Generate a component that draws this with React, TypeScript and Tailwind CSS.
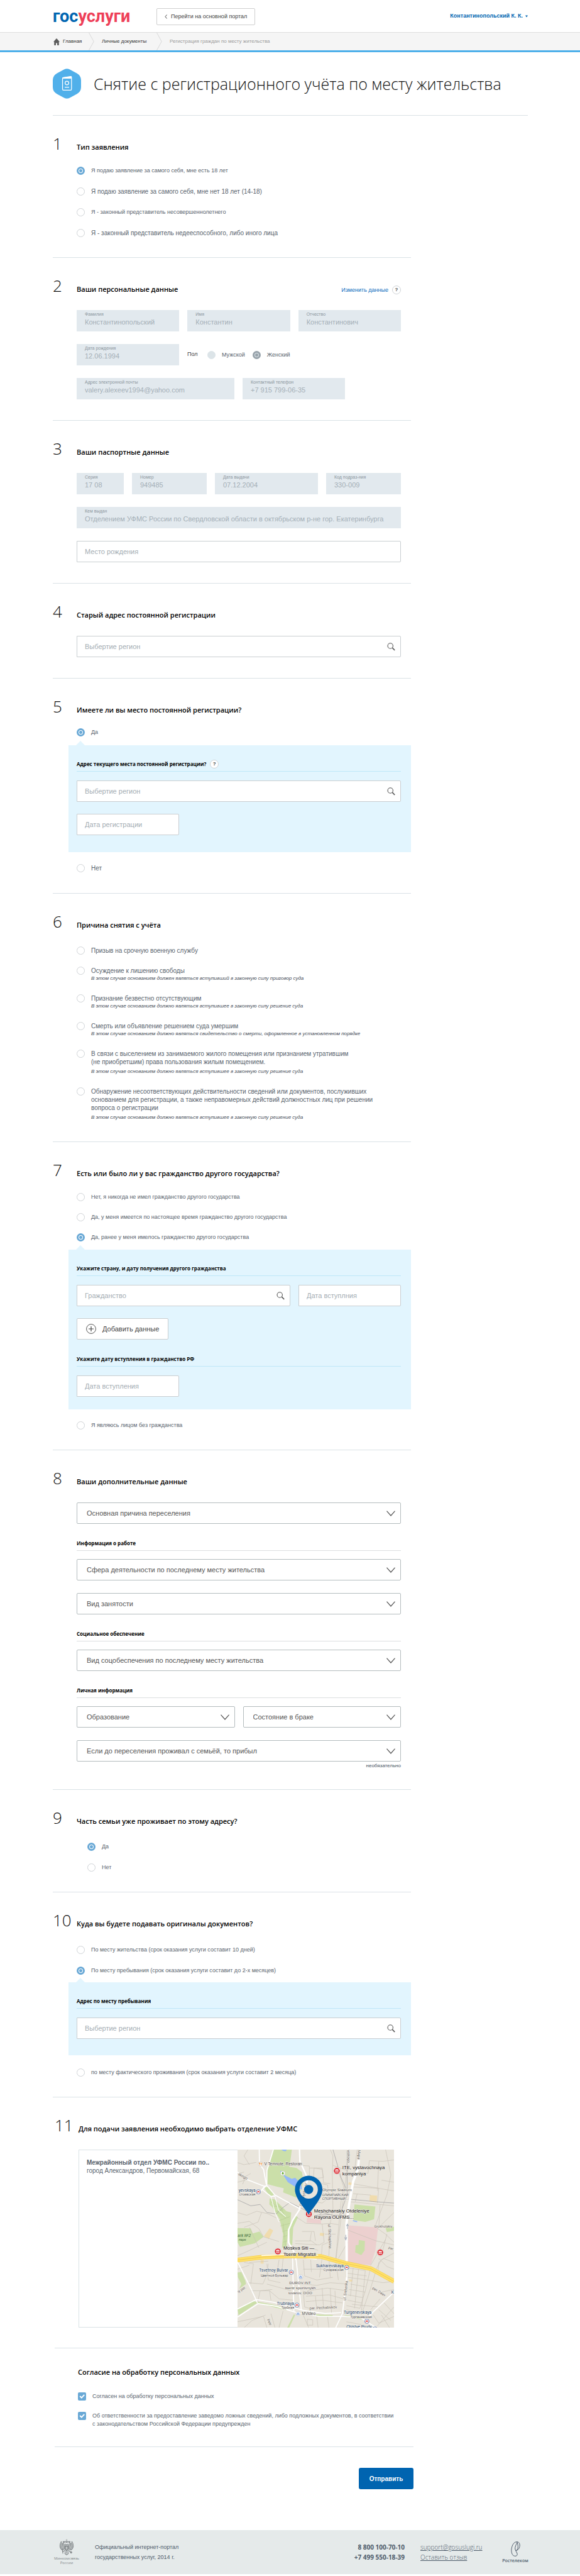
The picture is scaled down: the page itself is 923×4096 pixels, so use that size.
import React from "react";

const BODY = "font-['Liberation_Sans',Arial,sans-serif]";
const DISPLAY = "font-['Open_Sans','Noto_Sans',sans-serif]";

function Section({
  number,
  title,
  action,
  className = "",
  children,
}: {
  number: string;
  title: string;
  action?: React.ReactNode;
  className?: string;
  children: React.ReactNode;
}) {
  return (
    <section className={`border-b border-[#dae2e6] pt-[30px] ${className}`}>
      <div className={`flex h-7 items-baseline pr-4 ${DISPLAY}`}>
        <span className="w-[38px] shrink-0 whitespace-nowrap text-[26px] font-light leading-7 text-[#111]">{number}</span>
        <h2 className="flex-1 whitespace-nowrap text-[11px] font-semibold leading-[14px] text-black">{title}</h2>
        {action}
      </div>
      <div className="pl-[38px] pr-4">{children}</div>
    </section>
  );
}

function Radio({
  name,
  checked,
  small,
  note,
  noteGap,
  disabled,
  children,
}: {
  name: string;
  checked?: boolean;
  small?: boolean;
  note?: string;
  noteGap?: boolean;
  disabled?: boolean;
  children: React.ReactNode;
}) {
  const look = disabled
    ? "border-[#dce4e8] bg-[#dce4e8] checked:border-[3px] checked:border-[#98a3ab] checked:bg-[radial-gradient(circle,#98a3ab_2px,#dce4e8_3px)]"
    : "border-[#cfd3d6] bg-white checked:border-[3px] checked:border-[#6aa9d6] checked:bg-[radial-gradient(circle,#6aa9d6_2px,#fff_3px)]";
  return (
    <label className="flex items-start gap-[10px] text-[#59636d]">
      <input
        type="radio"
        name={name}
        defaultChecked={checked}
        className={`size-[13px] shrink-0 appearance-none rounded-full border ${look}`}
      />
      <span className={`block leading-[13px] ${small ? "text-[9px]" : "text-[10px]"}`}>
        {children}
        {note && (
          <em className={`block whitespace-nowrap text-[8px] italic leading-3 text-[#3f4a55] ${noteGap ? "mt-[3px]" : ""}`}>{note}</em>
        )}
      </span>
    </label>
  );
}

function Filled({ label, value, className = "" }: { label: string; value: string; className?: string }) {
  return (
    <label className={`block h-[34px] bg-[#e2e9ee] px-[13px] pt-[3px] ${className}`}>
      <span className="block text-[7px] leading-2 text-[#8b959d]">{label}</span>
      <input
        readOnly
        defaultValue={value}
        className="mt-px block h-[14px] w-full bg-transparent text-[11px] leading-[14px] text-[#a4afb7] outline-none"
      />
    </label>
  );
}

function SearchIcon() {
  return (
    <svg viewBox="0 0 13 13" className="absolute right-[9px] top-[11px] size-[13px]" fill="none" stroke="#575757" aria-hidden="true">
      <circle cx="5.2" cy="5" r="4.2" strokeWidth="1.1" />
      <path d="M8.4 8.2 12.2 12" strokeWidth="1.7" />
    </svg>
  );
}

function TextBox({ label, search, className = "" }: { label: string; search?: boolean; className?: string }) {
  return (
    <div className={`relative h-[34px] ${className}`}>
      <input
        aria-label={label}
        placeholder={label}
        className="h-full w-full rounded-r-[2px] border border-[#c9ced1] bg-white px-3 text-[11px] text-[#59636d] outline-none placeholder:text-[#a4adb3] placeholder:opacity-100"
      />
      {search && <SearchIcon />}
    </div>
  );
}

function Select({ label, className = "" }: { label: string; className?: string }) {
  return (
    <div className={`relative h-[34px] ${className}`}>
      <select
        aria-label={label}
        className="h-full w-full appearance-none rounded-[2px] border border-[#b4bcbe] bg-white pl-[15px] pr-8 text-[11px] text-[#555] outline-none"
      >
        <option>{label}</option>
      </select>
      <svg viewBox="0 0 14 9" className="pointer-events-none absolute right-[9px] top-[13px] h-[9px] w-[14px]" fill="none" stroke="#555" strokeWidth="1.2" aria-hidden="true">
        <path d="M.5.7 7 8 13.5.7" />
      </svg>
    </div>
  );
}

function SubHead({ children, tint, className = "" }: { children: React.ReactNode; tint?: boolean; className?: string }) {
  return (
    <div
      className={`flex h-[19px] items-start gap-[6px] border-b text-[8px] font-bold leading-[14px] text-black ${DISPLAY} ${
        tint ? "border-[#bfe7f8]" : "border-[#dcdfe0]"
      } ${className}`}
    >
      {children}
    </div>
  );
}

function Help() {
  return (
    <button
      type="button"
      aria-label="Подсказка"
      className={`flex size-[14px] shrink-0 items-center justify-center rounded-full border border-[#cfd3d6] bg-white text-[8px] font-bold leading-none text-[#444] ${BODY}`}
    >
      ?
    </button>
  );
}

function Panel({ className = "", children }: { className?: string; children: React.ReactNode }) {
  return (
    <div className={`relative -ml-[13px] -mr-4 bg-[#e2f5fe] pl-[13px] pr-4 ${className}`}>
      <span className="absolute -top-[7px] left-[12px] size-0 border-x-[7px] border-b-[7px] border-x-transparent border-b-[#e2f5fe]" />
      {children}
    </div>
  );
}

function Check({ children, className = "" }: { children: React.ReactNode; className?: string }) {
  return (
    <label className={`flex items-start gap-[10px] text-[9px] leading-[13px] text-[#59636d] ${className}`}>
      <span className="relative size-[13px] shrink-0">
        <input type="checkbox" defaultChecked className="block size-[13px] appearance-none rounded-[2px] bg-[#6aa9d6]" />
        <svg viewBox="0 0 13 13" className="pointer-events-none absolute inset-0" fill="none" stroke="#fff" strokeWidth="1.9" aria-hidden="true">
          <path d="M3.2 6 5.8 8.7 10.2 3.9" />
        </svg>
      </span>
      <span>{children}</span>
    </label>
  );
}

function Institution({ x, y }: { x: number; y: number }) {
  return (
    <g transform={`translate(${x} ${y})`}>
      <circle r="27" fill="#fff" stroke="#b9b3ab" strokeWidth="2" />
      <circle r="22" fill="#d8242b" />
      <path d="M-13-6H13M-9-6V8M0-6V8M9-6V8M-13 10H13M-10-10H10" stroke="#fff" strokeWidth="4" fill="none" />
    </g>
  );
}

function Metro({ x, y }: { x: number; y: number }) {
  return (
    <g transform={`translate(${x} ${y})`}>
      <circle r="16" fill="#fff" stroke="#33559a" strokeWidth="3" />
      <path d="M-8 7-4-6 0 3 4-6 8 7" fill="none" stroke="#e0302e" strokeWidth="4" />
    </g>
  );
}

function Shop({ x, y }: { x: number; y: number }) {
  return (
    <g transform={`translate(${x} ${y})`}>
      <circle r="17" fill="#fff" stroke="#a9a9a9" strokeWidth="2" />
      <path d="M-8-1H8V8H-8ZM-4-2V-6Q0-11 4-6V-2" fill="none" stroke="#3f74c9" strokeWidth="3" />
    </g>
  );
}

function CityMap() {
  return (
    <svg viewBox="12 12 1161 1322" preserveAspectRatio="xMidYMid slice" className="h-[283px] w-[249px] shrink-0" role="img" aria-label="Карта отделений">
      <rect x="12" y="12" width="1161" height="1322" fill="#e9e5dc" />
      <g fill="#cbdfa9">
        <path d="M278 12H415L405 90 395 140 450 150 490 180 500 240 490 300 450 370 400 350 350 330 355 300 310 290 235 270 232 160Z" />
        <path d="M210 295 240 290 282 345 265 360 240 345Z" />
        <path d="M250 375 285 380 330 425 375 470 410 480 405 560 385 640 375 745 342 740 350 640 325 530 270 440 248 420Z" />
        <path d="M440 500 460 515 425 590 418 720 402 720 398 600Z" />
        <path d="M12 595 110 597 125 635 175 620 205 660 140 708 30 735 12 700Z" />
        <path d="M880 420 1035 435 1025 530 960 550 870 535Z" />
        <path d="M1110 590 1173 585V615L1120 625Z" />
        <path d="M12 925 40 920 70 985 75 1010 25 1045 40 1010 15 960Z" />
        <path d="M12 1195 120 1135 165 1145 20 1242Z" />
        <path d="M155 1140 290 1165 380 1190 375 1205 160 1152Z" />
        <path d="M430 1235 440 1240 395 1334H380Z" />
        <path d="M590 1235 720 1240 715 1250 600 1248ZM800 1240 910 1250 935 1275 820 1248Z" />
      </g>
      <g fill="#ecd0cf">
        <path d="M835 575 1055 590 1035 760 1000 870 828 855Z" />
        <path d="M527 520 632 530V563L525 555Z" />
      </g>
      <path d="M912 684 957 690 955 762 930 795 885 775 888 722 910 720Z" fill="#cbdfa9" />
      <g fill="#f0dcae">
        <path d="M250 597 277 612 245 675 207 655Z" />
        <path d="M995 350 1048 355 1045 405 990 395ZM625 630 657 633 650 655 622 650ZM183 830 207 832 205 860 183 858ZM838 255 866 260 860 277 833 272ZM840 975 865 978 862 992 840 990Z" />
      </g>
      <path d="M330 170 345 175 365 205 415 230 440 222 485 270 490 310 440 290 385 255 350 200 330 185ZM335 12H378L370 26 350 22Z" fill="#94b8f9" />
      <path d="M868 540 900 548M925 470 955 485" stroke="#94b8f9" strokeWidth="8" fill="none" />
      <g fill="none" stroke="#c6c0b5" strokeWidth="3">
        <path d="M12 110 60 125 150 108M90 12 60 60 100 125M12 190 60 180M12 255 70 240M50 270 75 210 110 190M480 130 545 135V230M545 150H640L650 260 700 265M580 150 640 160 650 220 575 230ZM700 12 720 60 715 200 720 450 700 560 690 800M765 190 800 290 780 400 765 560 740 830M820 190 740 850M600 260 680 275 690 370 640 410 590 400" />
        <path d="M720 130 830 170M860 265 1173 320M865 290 1060 300 1050 410M900 12 870 250M990 95 1090 100 1173 90M990 95 980 190 905 180M1060 100 1050 320M1110 12 1150 200 1120 350 1030 590M1173 255 1080 240M1070 420 1060 590M870 340 1000 350M845 400 1173 430M900 340 885 400" />
        <path d="M12 480 80 500 155 470 240 490 300 520M60 590 165 550 190 480M12 560 100 545 170 600 205 660 320 695M80 770 230 700M12 800 80 770M100 590 170 740M450 515 520 560 640 565 655 700 620 720 440 710M440 690 560 690 600 720M490 620 580 620 590 690M640 565 700 560 760 570M430 740 560 745 610 760M560 625 550 690" />
        <path d="M660 640 740 640M635 800 640 720 690 700M830 610 1040 690 1173 720M1040 590 1110 640 1173 700M1173 780 1080 830 1040 900M1173 850 1095 820 1060 850 1055 910M1110 680 1000 870M830 700 760 820M1120 640 1090 760M1173 480 1050 600M1060 820 1120 880 1173 900" />
        <path d="M60 850 130 860 110 1010M100 850 240 840M230 860 240 980 330 1000M320 830 300 960M350 820 340 930M12 900 100 870M110 1060 250 1060 260 1130M230 1010 410 1060M160 1150 180 1060 270 1050M250 1060 320 1120 430 1130M90 1000 200 1010 230 940 240 860M500 830 510 950 600 980 720 960M555 830 560 920M640 810 620 960M500 900 730 900M500 1010 600 1020 700 1000 830 1010M690 820 700 960M740 830 760 980" />
        <path d="M530 1060 680 1040 830 1060M520 1100 690 1090 800 1120M520 1140 640 1130 790 1150M640 1040 650 1190M700 1040 710 1230M590 1100 600 1200M735 1060 740 1180M500 1060 510 1180 580 1200M830 890 960 910M830 930 970 950M830 960 980 980 1090 1000 1173 990M850 1010 960 1030M840 1050 960 1070M830 1090 940 1110M830 1130 930 1150M820 1170 920 1190M960 910 930 1230M910 900 880 1190M870 890 850 1100M1000 890 960 1060 920 1190M820 1200 900 1220M1040 910 1000 1040 930 1240M1173 1050 1080 1070" />
        <path d="M12 1290 200 1250M60 1334 120 1280 220 1240M205 1250 230 1334M350 1210 320 1334M260 1230 290 1334M500 1240 540 1334M530 1270 570 1275V1315H530ZM600 1250 610 1334M680 1250 690 1334M860 1160 1060 1180M1020 1240 1060 1300 1173 1250M1060 1200 1150 1280M1100 1150 1173 1230M1080 1240 1140 1334M1173 1180 1050 1320M1000 1200 1070 1120M820 1290 930 1310" />
        <path d="M290 400 350 460 300 470 370 520M270 430 330 440 360 500M320 540 400 510M330 580 400 560M345 620 390 610M350 660 380 650M350 700 380 690M350 560 370 740M260 400 300 430" stroke="#b6cb93" />
      </g>
      <g fill="none" stroke="#aaa9a9" strokeWidth="4">
        <path d="M12 385 110 430 180 420 230 480 300 490 340 450 400 405 550 480M620 495 640 480 720 500 820 500M600 500 700 495M835 380 1040 400 1173 410M825 20V350L770 500M720 12 780 220 830 330" />
      </g>
      <g fill="none" stroke="#fff" strokeLinejoin="round">
        <path d="M173 12 175 120 205 160 225 270M278 12 230 170 228 280" strokeWidth="8" />
        <path d="M12 180 80 235 210 285 230 280 290 350 480 455M210 290 185 320 150 330M225 280 195 310 260 360 290 358" strokeWidth="8" />
        <path d="M260 360 290 480 320 550M290 358 315 460 370 510" strokeWidth="5" />
        <path d="M472 12 475 100 520 200 530 240 470 460 420 540 390 610V700L430 770 445 830" strokeWidth="11" />
        <path d="M420 800 430 1210M445 810 470 1050 485 1200" strokeWidth="8" />
        <path d="M912 90 905 160 870 250 840 420 820 560 822 860" strokeWidth="18" />
        <path d="M824 860V970L790 1230 740 1334M820 960 800 1150" strokeWidth="8" />
        <path d="M12 845 100 1020 160 1150M12 1195 150 1125 280 1145 500 1205 660 1228 780 1222M12 1255 165 1155 300 1175 460 1225 620 1250 800 1250 920 1255 1040 1334M1173 1070 1020 1215 960 1280" strokeWidth="8" />
        <path d="M170 825 420 806 600 826" strokeWidth="7" />
      </g>
      <path d="M12 832 200 810 420 800 630 805 820 858 1000 895 1173 990" fill="none" stroke="#f5cd52" strokeWidth="34" />
      <path d="M12 832 200 810 420 800 630 805 820 858 1000 895 1173 990" fill="none" stroke="#ffe168" strokeWidth="28" />
      <path d="M12 832 200 810 420 800 630 805 820 858 1000 895 1173 990" fill="none" stroke="#e8b846" strokeWidth="3" />
      <path d="M190 799 360 789M520 791 610 795" fill="none" stroke="#fff" strokeWidth="7" />
      <path d="M828 602V572M820 580 828 566 836 580M815 645V672M807 664 815 682 823 664" fill="none" stroke="#a7b0bd" strokeWidth="5" />

      <g fontFamily="Roboto, sans-serif" fill="#6f6a64" stroke="#f2eee8" strokeWidth="5" paintOrder="stroke" fontSize="28">
        <text transform="translate(14 200) rotate(30)">skogo</text>
        <text transform="translate(828 14) rotate(90)">wskogo</text>
        <text transform="translate(905 14) rotate(92)">Мира</text>
        <text transform="translate(490 434) rotate(-76)">Olimpiyskiy pr</text>
        <text transform="translate(684 566) rotate(88)">ul. Shchepkina</text>
        <text transform="translate(815 1132) rotate(-84)">ul. Sretenka</text>
        <text x="1026" y="590" fontSize="26">Grokholskiy</text>
        <text transform="translate(1130 745) rotate(24)" fontSize="26">per.</text>
        <text transform="translate(1010 1045) rotate(32)" fontSize="27">per. Daev</text>
        <text transform="translate(546 1200) rotate(-3)" fontSize="28">per. Pechatnikov</text>
        <text transform="translate(18 1076) rotate(-32)" fontSize="27">iy per.</text>
        <text transform="translate(230 1274) rotate(66)" fontSize="27">Petr</text>
      </g>
      <g fontFamily="Roboto, sans-serif" fill="#28496e" stroke="#f6f3ee" strokeWidth="5" paintOrder="stroke" fontSize="31">
        <text x="145" y="324" textAnchor="end">yevskaya</text>
        <text x="388" y="920" textAnchor="end">Tsvetnoy Bulvar</text>
        <text x="800" y="884" textAnchor="end">Sukharevskaya</text>
        <text x="431" y="1163" textAnchor="end">Trubnaya</text>
        <text x="1006" y="1232" textAnchor="end">Turgenevskaya</text>
        <text x="1008" y="1338" textAnchor="end">Chistye Prudy</text>
        <text x="1153" y="1082">K</text>
      </g>
      <g fontFamily="Roboto, sans-serif" fill="#5a5a5a" stroke="#f6f3ee" strokeWidth="5" paintOrder="stroke" fontSize="25">
        <text x="145" y="354" textAnchor="end">стоевская</text>
        <text x="388" y="954" textAnchor="end">Цветной Бульвар</text>
        <text x="799" y="915" textAnchor="end">Сухаревская</text>
        <text x="432" y="1194" textAnchor="end">Трубная</text>
        <text x="1008" y="1262" textAnchor="end">Тургеневская</text>
        <text x="640" y="358">ОЛИМПИЙСКИЙ</text>
        <text x="640" y="388">СПОРТИВНЫЙ...</text>
      </g>
      <g fontFamily="Roboto, sans-serif" fontStyle="italic" fill="#3d6b3d">
        <text x="13" y="660" fontSize="31">ark №2</text>
        <text x="20" y="690" fontSize="26">парк</text>
      </g>
      <g fontFamily="'Liberation Sans', Arial, sans-serif" fill="#555" stroke="#f4f0ea" strokeWidth="5" paintOrder="stroke" fontSize="30">
        <text x="210" y="131">V Temnote, Restoran</text>
        <text x="640" y="322" fontSize="29">Olympic Stadium</text>
        <text x="478" y="1009" textAnchor="middle" fontSize="29">DUROV INT,</text>
        <text x="478" y="1048" textAnchor="middle" fontSize="29">tsentr sportivnykh</text>
        <text x="478" y="1087" textAnchor="middle" fontSize="29">tovarov, OOO</text>
        <text x="489" y="1240">MVideo</text>
      </g>
      <g fontFamily="'Liberation Sans', Arial, sans-serif" fill="#111" stroke="#f4f0ea" strokeWidth="5" paintOrder="stroke" fontSize="36">
        <text x="790" y="160">ITE, vystavochnaya</text>
        <text x="790" y="205">kompaniya</text>
        <text x="580" y="480">Meshchanskiy Otdeleniye</text>
        <text x="580" y="526">Rayona OUFMS...</text>
        <text x="352" y="756">Moskva Siti —</text>
        <text x="352" y="801">Tsentr Migratsii</text>
      </g>

      <circle cx="183" cy="120" r="17" fill="#fff" stroke="#aaa" strokeWidth="2" />
      <path d="M177 110V131M173 110V117H181V110M189 131V110Q195 113 192 121H189" fill="none" stroke="#ee8019" strokeWidth="3" />
      <circle cx="348" cy="189" r="17" fill="#fff" stroke="#aaa" strokeWidth="2" />
      <path d="M348 176 357 193H350V201H346V193H339Z" fill="#56a01c" />
      <Metro x={167} y={326} />
      <Metro x={411} y={923} />
      <Metro x={822} y={887} />
      <Metro x={453} y={1166} />
      <Metro x={972} y={1286} />
      <Metro x={1032} y={1343} />
      <Shop x={480} y={958} />
      <Shop x={461} y={1230} />
      <Institution x={749} y={171} />
      <Institution x={541} y={492} />
      <Institution x={311} y={768} />
      <Institution x={1071} y={776} />
      <path
        fillRule="evenodd"
        fill="#0064b0"
        d="M540 495C530 470 438 380 438 309A102 102 0 0 1 642 309C642 380 550 470 540 495ZM540 241A68 68 0 1 0 540 377A68 68 0 1 0 540 241ZM540 275A34 34 0 1 1 540 343A34 34 0 1 1 540 275Z"
      />
    </svg>
  );
}

function Eagle() {
  return (
    <svg viewBox="0 0 36 40" className="h-[26px] w-6" fill="none" stroke="#7d8285" strokeWidth="1.3" aria-hidden="true">
      <path d="M18 1V5M16 3H20M15 6H21L20 9H16ZM9 6 14 6 13 9H10ZM22 6H27L26 9H23Z" fill="#8b9093" strokeWidth=".8" />
      <path d="M12 10C9 10 8 12 10 13L14 15V19M24 10C27 10 28 12 26 13L22 15V19M14 12 18 15 22 12" strokeWidth="1.6" />
      <path d="M12 17C7 16 6 11 5 6 1 12 0 20 5 26 8 28 12 26 13 24M24 17C29 16 30 11 31 6 35 12 36 20 31 26 28 28 24 26 23 24" fill="#b9bebf" />
      <path d="M8 10C7 16 8 20 13 22M4 13C4 20 7 24 12 25M28 10C29 16 28 20 23 22M32 13C32 20 29 24 24 25M2 18C3 24 6 27 10 27M34 18C33 24 30 27 26 27" strokeWidth="1" />
      <path d="M13 17H23V24Q23 27 18 29 13 27 13 24Z" fill="#8f9496" />
      <path d="M18 19V26M16 22H20" stroke="#e5eaea" />
      <path d="M14 28 8 32M7 24 9 36M22 28 28 32M18 29V36M15 30 14 36 18 39 22 36 21 30" strokeWidth="1.6" />
      <circle cx="29" cy="33" r="2" fill="#8f9496" />
    </svg>
  );
}

function CrumbMark() {
  return (
    <svg viewBox="0 0 9 28" className="h-7 w-[9px] shrink-0" fill="none" stroke="#d8d8d8" aria-hidden="true">
      <path d="M.5 0 8.2 14 .5 28" />
    </svg>
  );
}

export default function App() {
  return (
    <div className={`min-h-screen bg-white text-[#333] ${BODY}`}>
      <header className="flex h-[51px] items-center pl-[84px] pr-[83px]">
        <a href="#" aria-label="госуслуги" className="w-[165px] font-[Roboto,sans-serif] text-[27px] font-bold leading-8 text-[#ee3f58]">
          <span className="text-[#0065b1]">гос</span>услуги
        </a>
        <button type="button" className="mt-[2px] flex h-[27px] items-center gap-[6px] rounded-[2px] border border-[#cfcfcf] px-3 text-[9px] whitespace-nowrap text-[#444]">
          <svg viewBox="0 0 4 7" className="h-[7px] w-1" fill="none" stroke="#444" aria-hidden="true">
            <path d="M3.5.5 1 3.5 3.5 6.5" />
          </svg>
          Перейти на основной портал
        </button>
        <button type="button" className="ml-auto flex items-center gap-1 whitespace-nowrap text-[9px] font-bold text-[#0065b1]">
          Контантинопольский К. К.
          <svg viewBox="0 0 4 4" className="size-1" fill="#0065b1" aria-hidden="true">
            <path d="M0 .5H4L2 3.5Z" />
          </svg>
        </button>
      </header>

      <nav className="flex h-8 items-center border-b-[3px] border-t border-b-[#4eb0ea] border-t-[#dedede] bg-[#f5f5f5] pl-[84px] text-[8px] whitespace-nowrap">
        <svg viewBox="0 0 12 13" className="h-[13px] w-3 p-px" fill="#5b5b5b" aria-hidden="true">
          <path d="M6 0 12 6.4H10.5V13H7.3V9H4.7V13H1.5V6.4H0Z" />
        </svg>
        <a href="#" className="ml-1 mr-[9px] w-8 text-[#333]">Главная</a>
        <CrumbMark />
        <a href="#" className="ml-3 mr-[11px] w-[76px] text-[#333]">Личные документы</a>
        <CrumbMark />
        <span className="ml-3 text-[#9b9b9b]">Регистрация граждан по месту жительства</span>
      </nav>

      <main className="pl-[84px] pr-[83px]">
        <div className="flex h-[101px] items-center gap-5 border-b border-[#dae2e6]">
          <svg viewBox="0 0 71 75" className="h-12 w-[45px] shrink-0" aria-hidden="true">
            <path d="M26 3Q35.500-3 45 3L61 12Q71 18 71 29V46Q71 57 61 63L45 72Q35.500 78 26 72L10 63Q0 57 0 46V29Q0 18 10 12Z" fill="#51b0ea" />
            <path d="M24.500 25Q24.500 23 26.500 22.500L45 19.500Q47 19.500 47 21.500V51Q47 54 44.500 54H27Q24.500 54 24.500 51Z" fill="none" stroke="#fff" strokeWidth="2" />
            <path d="M24 22 47 19V25H24Z" fill="#fff" />
            <circle cx="35.500" cy="36" r="4.500" fill="none" stroke="#fff" strokeWidth="2" />
            <path d="M30 46.500H41" stroke="#fff" strokeWidth="2" />
          </svg>
          <h1 className={`whitespace-nowrap text-[25px] font-light leading-8 text-[#111] ${DISPLAY}`}>Снятие с регистрационного учёта по месту жительства</h1>
        </div>

        <form className="max-w-[570px]" onSubmit={(e) => e.preventDefault()}>
          <Section number="1" title="Тип заявления" className="pb-8">
            <div className="mt-[23px] flex flex-col gap-5">
              <Radio name="kind" checked small>Я подаю заявление за самого себя, мне есть 18 лет</Radio>
              <Radio name="kind">Я подаю заявление за самого себя, мне нет 18 лет (14-18)</Radio>
              <Radio name="kind" small>Я - законный представитель несовершеннолетнего</Radio>
              <Radio name="kind">Я - законный представитель недееспособного, либо иного лица</Radio>
            </div>
          </Section>

          <Section
            number="2"
            title="Ваши персональные данные"
            className="pb-[33px]"
            action={
              <span className={`flex items-center gap-[6px] text-[9px] leading-[14px] ${BODY}`}>
                <a href="#" className="text-[#0b6bbd]">Изменить данные</a>
                <Help />
              </span>
            }
          >
            <div className="mt-[25px] grid grid-cols-3 gap-x-[13px]">
              <Filled label="Фамилия" value="Константинопольский" />
              <Filled label="Имя" value="Константин" />
              <Filled label="Отчество" value="Константинович" />
            </div>
            <div className="mt-5 flex items-center">
              <Filled label="Дата рождения" value="12.06.1994" className="w-[163px]" />
              <span className="ml-[13px] w-8 text-[9px] text-[#444]">Пол</span>
              <div className="flex gap-3">
                <Radio name="sex" small disabled>Мужской</Radio>
                <Radio name="sex" small disabled checked>Женский</Radio>
              </div>
            </div>
            <div className="mt-5 flex gap-[13px]">
              <Filled label="Адрес электронной почты" value="valery.alexeev1994@yahoo.com" className="w-[251px]" />
              <Filled label="Контактный телефон" value="+7 915 799-06-35" className="w-[163px]" />
            </div>
          </Section>

          <Section number="3" title="Ваши паспортные данные" className="pb-[33px]">
            <div className="mt-[25px] flex gap-[13px]">
              <Filled label="Серия" value="17 08" className="w-[75px]" />
              <Filled label="Номер" value="949485" className="w-[119px]" />
              <Filled label="Дата выдачи" value="07.12.2004" className="flex-1" />
              <Filled label="Код подраз-ния" value="330-009" className="w-[119px]" />
            </div>
            <Filled label="Кем выдан" value="Отделением УФМС России по Свердловской области в октябрьском р-не гор. Екатеринбурга" className="mt-5" />
            <TextBox label="Место рождения" className="mt-5" />
          </Section>

          <Section number="4" title="Старый адрес постоянной регистрации" className="pb-[33px]">
            <TextBox label="Выбертие регион" search className="mt-[25px]" />
          </Section>

          <Section number="5" title="Имеете ли вы место постоянной регистрации?" className="pb-[33px]">
            <div className="mt-[21px]">
              <Radio name="place" checked small>Да</Radio>
            </div>
            <Panel className="mt-[14px] pb-[27px] pt-[23px]">
              <SubHead tint>
                Адрес текущего места постоянной регистрации?
                <Help />
              </SubHead>
              <TextBox label="Выбертие регион" search className="mt-[14px]" />
              <TextBox label="Дата регистрации" className="mt-[19px] w-[163px]" />
            </Panel>
            <div className="mt-[19px]">
              <Radio name="place">Нет</Radio>
            </div>
          </Section>

          <Section number="6" title="Причина снятия с учёта" className="pb-8">
            <div className="mt-[26px] flex flex-col gap-[19px]">
              <Radio name="reason">Призыв на срочную военную службу</Radio>
              <Radio name="reason" note="В этом случае основанием должен являться вступивший в законную силу приговор суда">Осуждение к лишению свободы</Radio>
              <Radio name="reason" note="В этом случае основанием должно являться вступившее в законную силу решение суда">Признание безвестно отсутствующим</Radio>
              <Radio name="reason" note="В этом случае основанием должно являться свидетельство о смерти, оформленное в установленном порядке">
                Смерть или объявление решением суда умершим
              </Radio>
              <Radio name="reason" noteGap note="В этом случае основанием должно являться вступившее в законную силу решение суда">
                В связи с выселением из занимаемого жилого помещения или признанием утратившим
                <br />
                (не приобретшим) права пользования жилым помещением.
              </Radio>
              <Radio name="reason" noteGap note="В этом случае основанием должно являться вступившее в законную силу решение суда">
                Обнаружение несоответствующих действительности сведений или документов, послуживших
                <br />
                основанием для регистрации, а также неправомерных действий должностных лиц при решении
                <br />
                вопроса о регистрации
              </Radio>
            </div>
          </Section>

          <Section number="7" title="Есть или было ли у вас гражданство другого государства?" className="pb-8">
            <div className="mt-[23px] flex flex-col gap-[19px]">
              <Radio name="citizen" small>Нет, я никогда не имел гражданство другого государства</Radio>
              <Radio name="citizen" small>Да, у меня имеется по настоящее время гражданство другого государства</Radio>
              <Radio name="citizen" small checked>Да, ранее у меня имелось гражданство другого государства</Radio>
            </div>
            <Panel className="mt-[13px] pb-5 pt-[23px]">
              <SubHead tint>Укажите страну, и дату получения другого гражданства</SubHead>
              <div className="mt-[14px] flex gap-[13px]">
                <TextBox label="Гражданство" search className="flex-1" />
                <TextBox label="Дата вступлния" className="w-[163px]" />
              </div>
              <button type="button" className="mt-[19px] flex h-[34px] w-[146px] items-center gap-[10px] whitespace-nowrap rounded-[2px] border border-[#c9ced1] bg-white pl-[14px] text-[11px] text-[#444]">
                <svg viewBox="0 0 16 16" className="size-4" fill="none" stroke="#444" aria-hidden="true">
                  <circle cx="8" cy="8" r="7.400" strokeWidth=".9" />
                  <path d="M8 4V12M4 8H12" strokeWidth="1.200" />
                </svg>
                Добавить данные
              </button>
              <SubHead tint className="mt-6">Укажите дату вступления в гражданство РФ</SubHead>
              <TextBox label="Дата вступления" className="mt-[14px] w-[163px]" />
            </Panel>
            <div className="mt-[19px]">
              <Radio name="citizen" small>Я являюсь лицом без гражданства</Radio>
            </div>
          </Section>

          <Section number="8" title="Ваши дополнительные данные" className="pb-[30px]">
            <Select label="Основная причина переселения" className="mt-[25px]" />
            <SubHead className="mt-6">Информация о работе</SubHead>
            <Select label="Сфера деятельности по последнему месту жительства" className="mt-[13px]" />
            <Select label="Вид занятости" className="mt-5" />
            <SubHead className="mt-6">Социальное обеспечение</SubHead>
            <Select label="Вид соцобеспечения по последнему месту жительства" className="mt-[13px]" />
            <SubHead className="mt-6">Личная информация</SubHead>
            <div className="mt-[13px] grid grid-cols-2 gap-[13px]">
              <Select label="Образование" />
              <Select label="Состояние в браке" />
            </div>
            <Select label="Если до переселения проживал с семьёй, то прибыл" className="mt-5" />
            <p className="text-right text-[8px] leading-[14px] text-[#4a5563]">необязательно</p>
          </Section>

          <Section number="9" title="Часть семьи уже проживает по этому адресу?" className="pb-8">
            <div className="ml-[17px] mt-[26px] flex flex-col gap-5">
              <Radio name="family" small checked>Да</Radio>
              <Radio name="family" small>Нет</Radio>
            </div>
          </Section>

          <Section number="10" title="Куда вы будете подавать оригиналы документов?" className="pb-8">
            <div className="mt-[27px] flex flex-col gap-5">
              <Radio name="where" small>По месту жительства (срок оказания услуги составит 10 дней)</Radio>
              <Radio name="where" small checked>По месту пребывания (срок оказания услуги составит до 2-х месяцев)</Radio>
            </div>
            <Panel className="mt-3 pb-[26px] pt-[23px]">
              <SubHead tint>Адрес по месту пребывания</SubHead>
              <TextBox label="Выбертие регион" search className="mt-[14px]" />
            </Panel>
            <div className="mt-[21px]">
              <Radio name="where" small>по месту фактического проживания (срок оказания услуги составит 2 месяца)</Radio>
            </div>
          </Section>

          <div className="ml-[3px] -mr-1">
            <Section number="11" title="Для подачи заявления необходимо выбрать отделение УФМС" className="pb-8">
              <div className="mt-[25px] flex">
                <div className="w-[253px] border border-r-0 border-[#dae2e6] pl-3 pt-[13px] text-[10px] leading-[13px] text-[#59636d]">
                  <p className="font-bold">Межрайонный отдел УФМС России по..</p>
                  <p>город Александров, Первомайская, 68</p>
                </div>
                <CityMap />
              </div>
            </Section>

            <section className="border-b border-[#dae2e6] pb-[29px] pl-[37px] pt-[31px]">
              <h2 className={`text-[11px] font-semibold leading-[14px] text-black ${DISPLAY}`}>Согласие на обработку персональных данных</h2>
              <Check className="mt-[25px]">Согласен на обработку персональных данных</Check>
              <Check className="mt-[18px]">
                Об ответственности за предоставление заведомо ложных сведений, либо подложных документов, в соответствии
                <br />
                с законодательством Российской Федерации предупрежден
              </Check>
            </section>

            <div className="mb-[65px] mt-[33px] flex justify-end">
              <button type="submit" className="h-[34px] w-[87px] rounded-[3px] bg-[#0064b0] text-[10px] font-bold text-white">
                Отправить
              </button>
            </div>
          </div>
        </form>
      </main>

      <footer className="flex h-[70px] items-center bg-[#e5eaea] pl-[84px] pr-[83px] text-[#4f5c6b]">
        <div className={`flex w-[44px] flex-col items-center text-[6px] leading-[7px] text-[#83898c] ${DISPLAY}`}>
          <Eagle />
          <span className="mt-[2px]">Минкомсвязь</span>
          <span>России</span>
        </div>
        <p className="ml-[23px] text-[9px] leading-4">
          Официальный интернет-портал
          <br />
          государственных услуг, 2014 г.
        </p>
        <p className={`ml-auto whitespace-nowrap text-right text-[10px] font-bold leading-4 ${DISPLAY}`}>
          8 800 100-70-10
          <br />
          +7 499 550-18-39
        </p>
        <div className={`ml-[25px] flex w-[99px] flex-col items-start whitespace-nowrap text-[10px] font-light leading-4 ${DISPLAY}`}>
          <a href="mailto:support@gosuslugi.ru" className="underline">support@gosuslugi.ru</a>
          <a href="#" className="underline">Оставить отзыв</a>
        </div>
        <div className={`ml-8 flex w-10 flex-col items-center text-[7px] font-semibold leading-[9px] ${DISPLAY}`}>
          <svg viewBox="0 0 22 36" className="h-6 w-[15px]" fill="none" stroke="#4f5c6b" strokeWidth="1.500" aria-hidden="true">
            <path d="M12 22C19 20 21 14 21 9 21 4 18 1 14 1 7 1 2 9 1 20 1 29 4 35 10 35 15 35 16 31 14 27 12 23 9 20 10 14 11 9 15 3 15 1M12 22C17 19 18 13 15 3" />
          </svg>
          <span className="mt-[2px]">Ростелеком</span>
        </div>
      </footer>
    </div>
  );
}
